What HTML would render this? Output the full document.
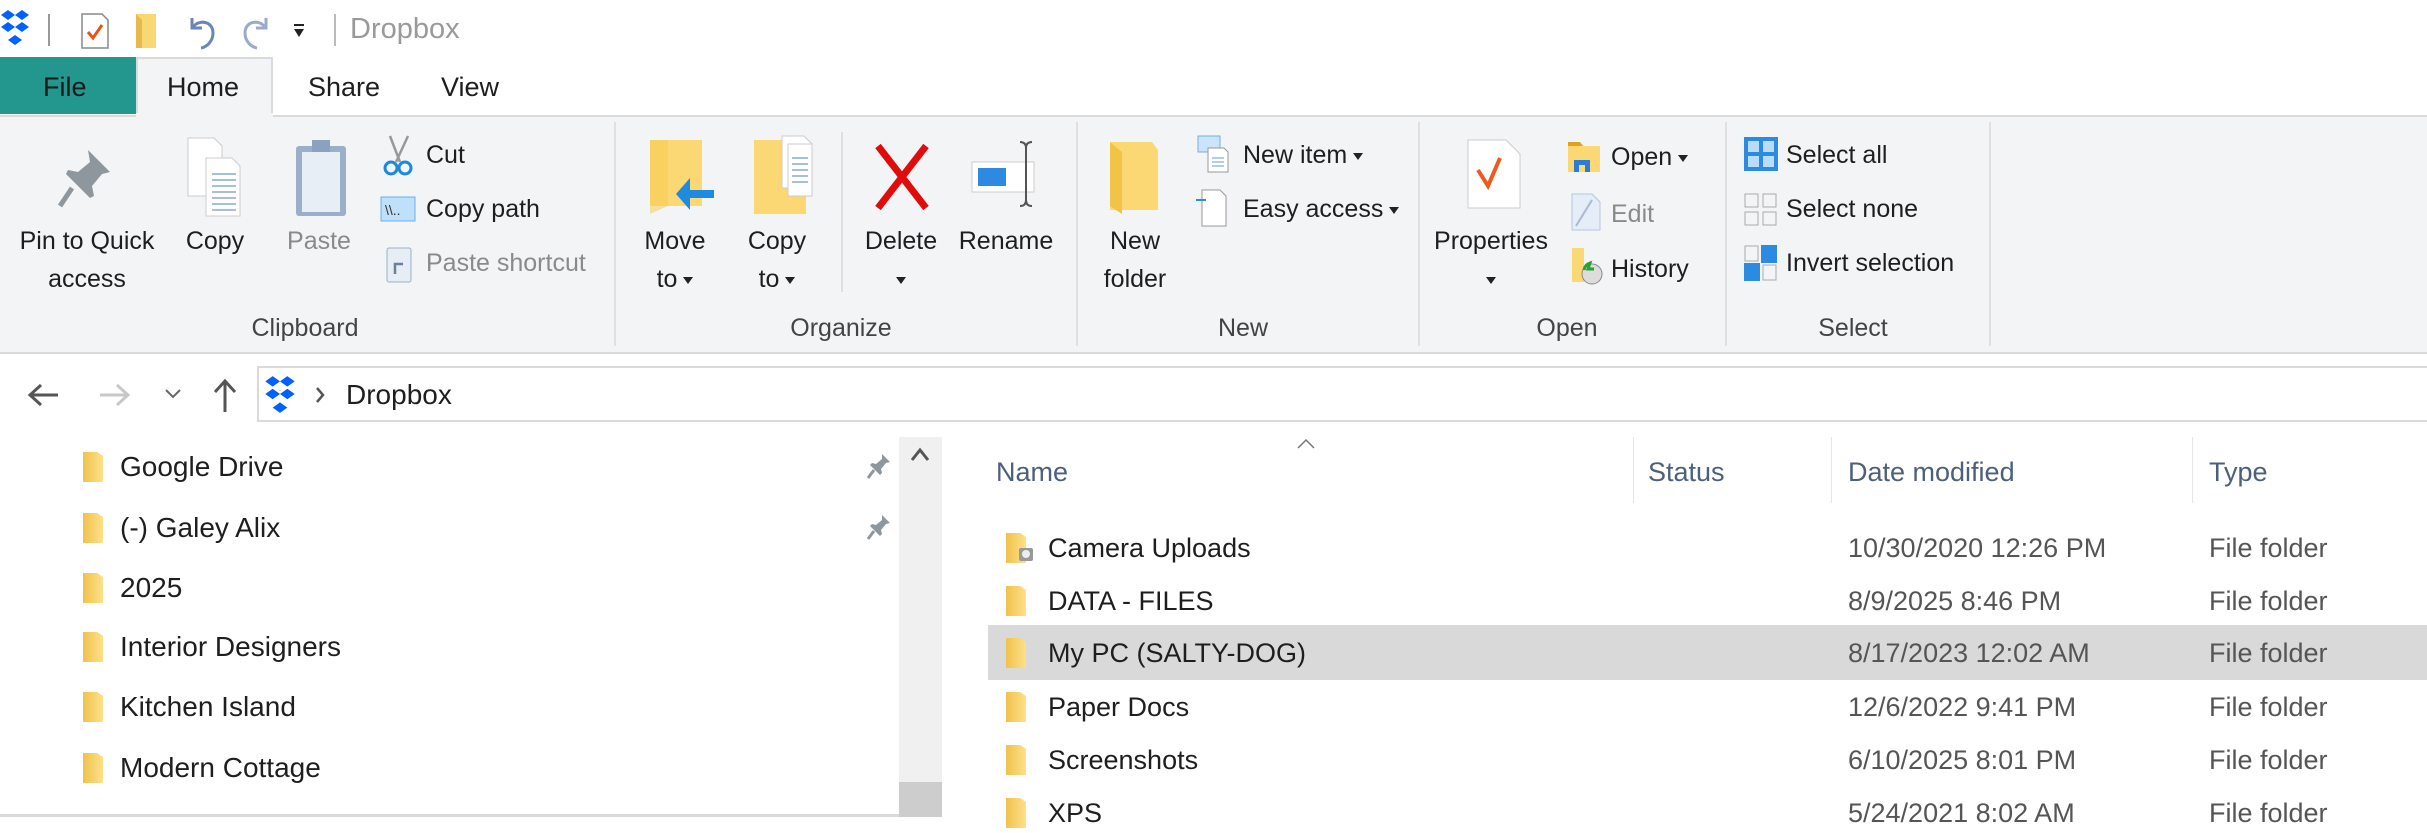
<!DOCTYPE html>
<html><head><meta charset="utf-8">
<style>
*{margin:0;padding:0;box-sizing:border-box}
body{width:2427px;height:817px;overflow:hidden;background:#fff;font-family:"Liberation Sans",sans-serif;color:#1e1e1e;position:relative}
.a{position:absolute}
.t{position:absolute;white-space:nowrap;height:40px;line-height:40px}
.r{font-size:25px}
.c{text-align:center;width:240px}
.g{color:#8a8a8a}
.n{font-size:28px}
.f{font-size:27px}
.d{color:#555}
.tri{display:inline-block;width:0;height:0;border-left:5px solid transparent;border-right:5px solid transparent;border-top:7px solid #222;vertical-align:middle;margin-left:6px}
</style></head><body>

<!-- title bar -->
<svg class="a" style="left:0;top:8px" width="30" height="40" viewBox="0 0 30 40"><g fill="#0061fe"><path d="M8 2l7 5-7 5-7-5z"/><path d="M22 2l7 5-7 5-7-5z"/><path d="M8 14l7 5-7 5-7-5z"/><path d="M22 14l7 5-7 5-7-5z"/><path d="M15 27l7 5-7 5-7-5z"/></g></svg>
<div class="a" style="left:48px;top:14px;width:2px;height:32px;background:#999"></div>
<svg class="a" style="left:80px;top:12px" width="30" height="38"><path d="M2 2h20l6 6v28H2z" fill="#fff" stroke="#888" stroke-width="1.5"/><path d="M8 20l5 6 9-13" stroke="#e8541a" stroke-width="3" fill="none"/></svg>
<svg class="a" style="left:134px;top:14px" width="24" height="34"><path d="M2 0h20v34H2z" fill="#f8d775"/><path d="M2 0v34h6V6z" fill="#e8b94a"/></svg>
<svg class="a" style="left:184px;top:14px" width="34" height="36"><path d="M8 4v10h10M9 13c6-8 20-6 20 6 0 8-6 14-12 15" stroke="#6a86b8" stroke-width="3" fill="none"/></svg>
<svg class="a" style="left:240px;top:14px" width="34" height="36"><path d="M26 4v10H16M25 13c-6-8-20-6-20 6 0 8 6 14 12 15" stroke="#9aaacc" stroke-width="3" fill="none"/></svg>
<div class="a" style="left:294px;top:24px;width:10px;height:2px;background:#222"></div>
<div class="a" style="left:294px;top:29px;width:0;height:0;border-left:5px solid transparent;border-right:5px solid transparent;border-top:8px solid #222"></div>
<div class="a" style="left:334px;top:14px;width:2px;height:32px;background:#bbb"></div>
<div class="t" style="left:350px;top:9px;font-size:29px;color:#999">Dropbox</div>

<!-- tabs -->
<div class="a" style="left:0;top:57px;width:136px;height:57px;background:#23978e"></div>
<div class="a" style="left:136px;top:57px;width:137px;height:60px;background:#f3f4f6;border:2px solid #dadada;border-bottom:none"></div>
<div class="t" style="left:43px;top:67px;font-size:27px;color:#1a1a1a">File</div>
<div class="t" style="left:167px;top:67px;font-size:27px">Home</div>
<div class="t" style="left:308px;top:67px;font-size:27px">Share</div>
<div class="t" style="left:441px;top:67px;font-size:27px">View</div>

<!-- ribbon -->
<div class="a" style="left:0;top:115px;width:2427px;height:239px;background:#f3f4f6;border-top:2px solid #dadada;border-bottom:2px solid #dadada"></div>
<div class="a" style="left:136px;top:113px;width:137px;height:4px;background:#f3f4f6"></div>
<div class="a" style="left:614px;top:122px;width:2px;height:224px;background:#e0e0e0"></div>
<div class="a" style="left:841px;top:132px;width:2px;height:160px;background:#e0e0e0"></div>
<div class="a" style="left:1076px;top:122px;width:2px;height:224px;background:#e0e0e0"></div>
<div class="a" style="left:1418px;top:122px;width:2px;height:224px;background:#e0e0e0"></div>
<div class="a" style="left:1725px;top:122px;width:2px;height:224px;background:#e0e0e0"></div>
<div class="a" style="left:1989px;top:122px;width:2px;height:224px;background:#e0e0e0"></div>

<!-- clipboard icons -->
<svg class="a" style="left:58px;top:148px" width="56" height="62"><path d="M30 2l22 22-8 2-10 12 2 10-4 2-24-24 2-4 10 2 12-10z" fill="#8e979e"/><path d="M14 40L2 58" stroke="#8e979e" stroke-width="5"/></svg>
<svg class="a" style="left:186px;top:136px" width="60" height="82"><path d="M2 2h26l8 8v50H2z" fill="#fff" stroke="#ccc"/><path d="M20 22h26l8 8v50H20z" fill="#fff" stroke="#ccc"/><g stroke="#a8bfdc" stroke-width="2"><path d="M26 38h24M26 44h24M26 50h24M26 56h24M26 62h24M26 68h24M26 74h24"/></g></svg>
<svg class="a" style="left:294px;top:138px" width="54" height="80"><rect x="2" y="8" width="50" height="70" rx="3" fill="#9bb0c8"/><rect x="8" y="14" width="38" height="60" fill="#e8eef5"/><path d="M18 2h18v12H18z" fill="#8aa2bf"/></svg>
<svg class="a" style="left:382px;top:134px" width="34" height="42"><path d="M8 2l10 26M26 2L14 28" stroke="#999" stroke-width="2.5"/><circle cx="9" cy="34" r="6" fill="none" stroke="#1c8adb" stroke-width="3"/><circle cx="23" cy="34" r="6" fill="none" stroke="#1c8adb" stroke-width="3"/></svg>
<svg class="a" style="left:380px;top:196px" width="36" height="26"><rect x="1" y="1" width="34" height="24" fill="#bfe0fa" stroke="#6ab0ea"/><text x="5" y="19" font-size="14" font-family="Liberation Sans" fill="#333">\\..</text></svg>
<svg class="a" style="left:386px;top:244px" width="26" height="40"><rect x="1" y="4" width="24" height="34" rx="2" fill="#e6edf5" stroke="#9bb0c8"/><path d="M9 30v-10h8" stroke="#6a7f99" stroke-width="2.5" fill="none"/></svg>
<div class="t r c" style="left:-33px;top:221px">Pin to Quick</div>
<div class="t r c" style="left:-33px;top:259px">access</div>
<div class="t r c" style="left:95px;top:221px">Copy</div>
<div class="t r c g" style="left:199px;top:221px">Paste</div>
<div class="t r" style="left:426px;top:135px">Cut</div>
<div class="t r" style="left:426px;top:189px">Copy path</div>
<div class="t r g" style="left:426px;top:243px">Paste shortcut</div>
<div class="t r c" style="left:185px;top:308px;color:#444">Clipboard</div>

<!-- organize -->
<svg class="a" style="left:648px;top:138px" width="68" height="82"><path d="M2 2h52v66H2z" fill="#fbd874"/><path d="M2 2v74l18-8V2z" fill="#f6c94c" opacity=".5"/><path d="M66 52H42V40L28 56l14 16V60h24z" fill="#1e8ae0"/></svg>
<svg class="a" style="left:752px;top:134px" width="66" height="86"><path d="M2 6h52v74H2z" fill="#fbd874"/><path d="M30 2h22l8 8v44H30z" fill="#fff" stroke="#ccc"/><path d="M36 10h24v52H36z" fill="#fff" stroke="#ccc"/><g stroke="#a8bfdc" stroke-width="2"><path d="M40 24h16M40 30h16M40 36h16M40 42h16M40 48h16"/></g></svg>
<svg class="a" style="left:874px;top:144px" width="56" height="66"><path d="M4 2l48 62M52 2L4 64" stroke="#e00b0b" stroke-width="7"/></svg>
<svg class="a" style="left:970px;top:138px" width="72" height="72"><rect x="2" y="24" width="62" height="30" fill="#fff" stroke="#ccc"/><rect x="8" y="30" width="28" height="18" fill="#2c8ae0"/><path d="M50 4c4 0 6 2 6 6v52c0 4 2 6 6 6M62 4c-4 0-6 2-6 6M56 62c0 4-2 6-6 6" stroke="#555" stroke-width="2" fill="none"/></svg>
<div class="t r c" style="left:555px;top:221px">Move</div>
<div class="t r c" style="left:555px;top:259px">to<span class="tri"></span></div>
<div class="t r c" style="left:657px;top:221px">Copy</div>
<div class="t r c" style="left:657px;top:259px">to<span class="tri"></span></div>
<div class="t r c" style="left:781px;top:221px">Delete</div>
<div class="t r c" style="left:781px;top:259px"><span class="tri" style="margin:0"></span></div>
<div class="t r c" style="left:886px;top:221px">Rename</div>
<div class="t r c" style="left:721px;top:308px;color:#444">Organize</div>

<!-- new -->
<svg class="a" style="left:1108px;top:140px" width="56" height="76"><path d="M2 2h42l6 8v60H2z" fill="#fbd874"/><path d="M2 2l12 10v62L2 66z" fill="#f2c445"/></svg>
<svg class="a" style="left:1196px;top:134px" width="34" height="40"><rect x="2" y="2" width="22" height="16" fill="#cde4f8" stroke="#6ab0ea"/><path d="M12 14h16l4 4v20H12z" fill="#fff" stroke="#999"/><g stroke="#6a9ad0"><path d="M16 24h12M16 28h12M16 32h12"/></g></svg>
<svg class="a" style="left:1196px;top:188px" width="34" height="40"><path d="M6 2h18l6 6v30H6z" fill="#fff" stroke="#999"/><path d="M0 12h10" stroke="#2c8ae0" stroke-width="2"/></svg>
<div class="t r c" style="left:1015px;top:221px">New</div>
<div class="t r c" style="left:1015px;top:259px">folder</div>
<div class="t r" style="left:1243px;top:135px">New item<span class="tri"></span></div>
<div class="t r" style="left:1243px;top:189px">Easy access<span class="tri"></span></div>
<div class="t r c" style="left:1123px;top:308px;color:#444">New</div>

<!-- open -->
<svg class="a" style="left:1466px;top:138px" width="56" height="72"><path d="M2 2h38l14 14v54H2z" fill="#fff" stroke="#ccc"/><path d="M12 32l10 16 12-28" stroke="#ef5a1c" stroke-width="4" fill="none"/></svg>
<svg class="a" style="left:1566px;top:138px" width="36" height="36"><path d="M2 4h12l3 4h17v26H2z" fill="#fbd874"/><path d="M2 4h12l3 4H2z" fill="#e0a21c"/><path d="M8 34V22h16v12h-5v-7h-6v7z" fill="#2c7cd6"/></svg>
<svg class="a" style="left:1570px;top:192px" width="34" height="40"><path d="M2 2h20l8 8v28H2z" fill="#e4edf8" stroke="#b5c6dc"/><path d="M6 34l16-26" stroke="#a9b9d0" stroke-width="2"/></svg>
<svg class="a" style="left:1570px;top:246px" width="36" height="40"><path d="M2 2h12v34H2z" fill="#fbd874"/><circle cx="22" cy="28" r="10" fill="#ddd" stroke="#888"/><path d="M14 24a9 9 0 0 1 6-7l-2 6h6" stroke="#2ca02c" stroke-width="3" fill="none"/></svg>
<div class="t r c" style="left:1371px;top:221px">Properties</div>
<div class="t r c" style="left:1371px;top:259px"><span class="tri" style="margin:0"></span></div>
<div class="t r" style="left:1611px;top:137px">Open<span class="tri"></span></div>
<div class="t r g" style="left:1611px;top:194px">Edit</div>
<div class="t r" style="left:1611px;top:249px">History</div>
<div class="t r c" style="left:1447px;top:308px;color:#444">Open</div>

<!-- select -->
<svg class="a" style="left:1743px;top:136px" width="36" height="36"><rect x="1" y="1" width="34" height="34" fill="#2c8ae0"/><g fill="#b9dcf8"><rect x="5" y="5" width="11" height="11"/><rect x="20" y="5" width="11" height="11"/><rect x="5" y="20" width="11" height="11"/><rect x="20" y="20" width="11" height="11"/></g></svg>
<svg class="a" style="left:1743px;top:192px" width="36" height="36"><g fill="none" stroke="#aaa"><rect x="2" y="2" width="13" height="13"/><rect x="20" y="2" width="13" height="13"/><rect x="2" y="20" width="13" height="13"/><rect x="20" y="20" width="13" height="13"/></g></svg>
<svg class="a" style="left:1743px;top:244px" width="36" height="38"><rect x="2" y="2" width="13" height="15" fill="none" stroke="#aaa"/><rect x="18" y="1" width="16" height="18" fill="#2c8ae0"/><rect x="1" y="19" width="16" height="18" fill="#2c8ae0"/><rect x="20" y="21" width="13" height="15" fill="none" stroke="#aaa"/></svg>
<div class="t r" style="left:1786px;top:135px">Select all</div>
<div class="t r" style="left:1786px;top:189px">Select none</div>
<div class="t r" style="left:1786px;top:243px">Invert selection</div>
<div class="t r c" style="left:1733px;top:308px;color:#444">Select</div>

<!-- address bar -->
<svg class="a" style="left:26px;top:382px" width="34" height="26"><path d="M32 13H6M15 3L4 13l11 10" stroke="#555" stroke-width="3" fill="none"/></svg>
<svg class="a" style="left:98px;top:382px" width="34" height="26"><path d="M2 13h26M19 3l11 10-11 10" stroke="#c8c8c8" stroke-width="3" fill="none"/></svg>
<svg class="a" style="left:164px;top:388px" width="18" height="12"><path d="M2 2l7 7 7-7" stroke="#666" stroke-width="2" fill="none"/></svg>
<svg class="a" style="left:212px;top:378px" width="26" height="36"><path d="M13 34V4M3 14L13 3l10 11" stroke="#555" stroke-width="3" fill="none"/></svg>
<div class="a" style="left:257px;top:366px;width:2170px;height:56px;border:2px solid #dadada;border-right:none"></div>
<svg class="a" style="left:262px;top:374px" width="36" height="42" viewBox="0 0 30 40"><g fill="#0061fe"><path d="M8 2l7 5-7 5-7-5z"/><path d="M22 2l7 5-7 5-7-5z"/><path d="M8 14l7 5-7 5-7-5z"/><path d="M22 14l7 5-7 5-7-5z"/><path d="M15 27l7 5-7 5-7-5z"/></g></svg>
<svg class="a" style="left:314px;top:386px" width="12" height="18"><path d="M3 2l6 7-6 7" stroke="#555" stroke-width="2.5" fill="none"/></svg>
<div class="t" style="left:346px;top:375px;font-size:28px">Dropbox</div>

<!-- nav pane -->
<div class="a" style="left:899px;top:437px;width:43px;height:380px;background:#f0f0f0"></div>
<div class="a" style="left:899px;top:782px;width:43px;height:35px;background:#cdcdcd"></div>
<svg class="a" style="left:910px;top:446px" width="20" height="18"><path d="M2 14l8-10 8 10" stroke="#555" stroke-width="3" fill="none"/></svg>
<div class="a" style="left:0;top:814px;width:899px;height:3px;background:#dadada"></div>

<svg width="0" height="0" style="position:absolute"><defs><linearGradient id="fg" x1="0" x2="1"><stop offset="0" stop-color="#f0c24c"/><stop offset="1" stop-color="#fde08a"/></linearGradient></defs></svg>

<svg class="a" style="left:82px;top:451px" width="22" height="32"><path d="M1 1h14l6 4v26H1z" fill="url(#fg)"/></svg>
<svg class="a" style="left:82px;top:512px" width="22" height="32"><path d="M1 1h14l6 4v26H1z" fill="url(#fg)"/></svg>
<svg class="a" style="left:82px;top:572px" width="22" height="32"><path d="M1 1h14l6 4v26H1z" fill="url(#fg)"/></svg>
<svg class="a" style="left:82px;top:631px" width="22" height="32"><path d="M1 1h14l6 4v26H1z" fill="url(#fg)"/></svg>
<svg class="a" style="left:82px;top:691px" width="22" height="32"><path d="M1 1h14l6 4v26H1z" fill="url(#fg)"/></svg>
<svg class="a" style="left:82px;top:752px" width="22" height="32"><path d="M1 1h14l6 4v26H1z" fill="url(#fg)"/></svg>
<div class="t n" style="left:120px;top:447px">Google Drive</div>
<div class="t n" style="left:120px;top:508px">(-) Galey Alix</div>
<div class="t n" style="left:120px;top:568px">2025</div>
<div class="t n" style="left:120px;top:627px">Interior Designers</div>
<div class="t n" style="left:120px;top:687px">Kitchen Island</div>
<div class="t n" style="left:120px;top:748px">Modern Cottage</div>
<svg class="a" style="left:866px;top:452px" width="26" height="28"><path d="M16 2l8 8-4 1-5 6 1 4-2 2-10-10 2-2 4 1 6-5z" fill="#8e979e"/><path d="M8 18L2 26" stroke="#8e979e" stroke-width="3"/></svg>
<svg class="a" style="left:866px;top:513px" width="26" height="28"><path d="M16 2l8 8-4 1-5 6 1 4-2 2-10-10 2-2 4 1 6-5z" fill="#8e979e"/><path d="M8 18L2 26" stroke="#8e979e" stroke-width="3"/></svg>

<!-- file list -->
<svg class="a" style="left:1296px;top:438px" width="20" height="12"><path d="M2 10l8-8 8 8" stroke="#777" stroke-width="1.5" fill="none"/></svg>
<div class="a" style="left:1633px;top:437px;width:1px;height:66px;background:#e5e5e5"></div>
<div class="a" style="left:1831px;top:437px;width:1px;height:66px;background:#e5e5e5"></div>
<div class="a" style="left:2192px;top:437px;width:1px;height:66px;background:#e5e5e5"></div>
<div class="t f" style="left:996px;top:452px;color:#4c607a">Name</div>
<div class="t f" style="left:1648px;top:452px;color:#4c607a">Status</div>
<div class="t f" style="left:1848px;top:452px;color:#4c607a">Date modified</div>
<div class="t f" style="left:2209px;top:452px;color:#4c607a">Type</div>

<div class="a" style="left:988px;top:625px;width:1439px;height:55px;background:#d9d9d9"></div>

<svg class="a" style="left:1005px;top:532px" width="30" height="32"><path d="M1 1h14l6 4v26H1z" fill="url(#fg)"/><rect x="14" y="16" width="14" height="13" rx="2" fill="#999"/><circle cx="21" cy="22" r="4" fill="#eee"/></svg>
<svg class="a" style="left:1005px;top:585px" width="22" height="32"><path d="M1 1h14l6 4v26H1z" fill="url(#fg)"/></svg>
<svg class="a" style="left:1005px;top:637px" width="22" height="32"><path d="M1 1h14l6 4v26H1z" fill="url(#fg)"/></svg>
<svg class="a" style="left:1005px;top:691px" width="22" height="32"><path d="M1 1h14l6 4v26H1z" fill="url(#fg)"/></svg>
<svg class="a" style="left:1005px;top:744px" width="22" height="32"><path d="M1 1h14l6 4v26H1z" fill="url(#fg)"/></svg>
<svg class="a" style="left:1005px;top:797px" width="22" height="32"><path d="M1 1h14l6 4v26H1z" fill="url(#fg)"/></svg>

<div class="t f" style="left:1048px;top:528px">Camera Uploads</div>
<div class="t f" style="left:1048px;top:581px">DATA - FILES</div>
<div class="t f" style="left:1048px;top:633px">My PC (SALTY-DOG)</div>
<div class="t f" style="left:1048px;top:687px">Paper Docs</div>
<div class="t f" style="left:1048px;top:740px">Screenshots</div>
<div class="t f" style="left:1048px;top:793px">XPS</div>

<div class="t f d" style="left:1848px;top:528px">10/30/2020 12:26 PM</div>
<div class="t f d" style="left:1848px;top:581px">8/9/2025 8:46 PM</div>
<div class="t f d" style="left:1848px;top:633px">8/17/2023 12:02 AM</div>
<div class="t f d" style="left:1848px;top:687px">12/6/2022 9:41 PM</div>
<div class="t f d" style="left:1848px;top:740px">6/10/2025 8:01 PM</div>
<div class="t f d" style="left:1848px;top:793px">5/24/2021 8:02 AM</div>

<div class="t f d" style="left:2209px;top:528px">File folder</div>
<div class="t f d" style="left:2209px;top:581px">File folder</div>
<div class="t f d" style="left:2209px;top:633px">File folder</div>
<div class="t f d" style="left:2209px;top:687px">File folder</div>
<div class="t f d" style="left:2209px;top:740px">File folder</div>
<div class="t f d" style="left:2209px;top:793px">File folder</div>
</body></html>
